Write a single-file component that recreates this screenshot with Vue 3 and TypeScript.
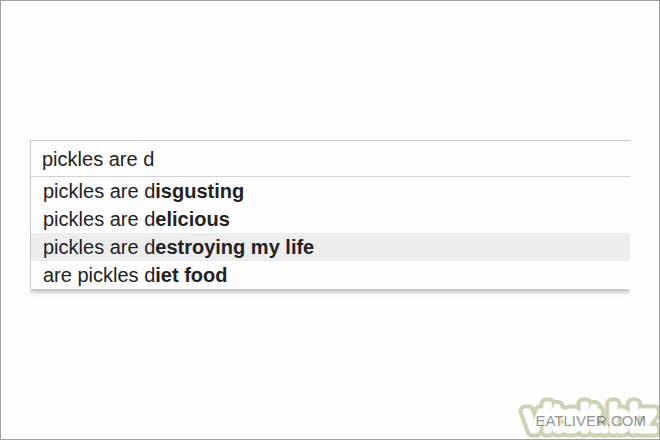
<script setup lang="ts">
import { ref } from 'vue'

interface Suggestion {
  typed: string
  rest: string
}

const query = ref('pickles are d')
const active = ref(2)
const suggestions: Suggestion[] = [
  { typed: 'pickles are d', rest: 'isgusting' },
  { typed: 'pickles are d', rest: 'elicious' },
  { typed: 'pickles are d', rest: 'estroying my life' },
  { typed: 'are pickles d', rest: 'iet food' },
]
</script>

<template>
  <main class="page">
    <form class="search" role="search" @submit.prevent>
      <input
        v-model="query"
        class="field"
        type="text"
        aria-label="Search"
        aria-controls="suggestions"
        autocomplete="off"
        spellcheck="false"
      />
      <ul id="suggestions" class="list">
        <li v-for="(item, index) in suggestions" :key="item.rest">
          <button
            type="button"
            class="option"
            :class="{ active: index === active }"
            @mouseenter="active = index"
            @click="query = item.typed + item.rest"
          >{{ item.typed }}<b>{{ item.rest }}</b></button>
        </li>
      </ul>
    </form>
    <div class="marks">
      <svg class="logo" width="142" height="54" viewBox="0 0 142 54">
        <text class="logo-text outline" x="7" y="45" aria-hidden="true">vitsit.biz</text>
        <text class="logo-text" x="7" y="45">vitsit.biz</text>
      </svg>
      <span class="credit">EATLIVER.COM</span>
    </div>
  </main>
</template>

<style>
body {
  margin: 0;
  background: #fefefe;
}
</style>

<style scoped>
.page {
  position: relative;
  box-sizing: border-box;
  min-height: 100vh;
  padding: 139px 29px 0;
  overflow: hidden;
  border: 1px solid #a0a0a0;
  background: #fefefe;
  color: #222;
  font-family: "Liberation Sans", Arial, sans-serif;
  font-size: 20px;
}

.search {
  border-top: 1px solid #c8c8c8;
  border-left: 1px solid #c8c8c8;
  box-shadow: 0 3px 5px rgba(0, 0, 0, 0.28);
  background: #fefefe;
  clip-path: inset(0 0 -12px 0);
}

.field {
  display: block;
  box-sizing: border-box;
  width: 100%;
  height: 36px;
  padding: 2px 11px 0;
  border: 0;
  border-bottom: 1px solid #d4d4d4;
  outline: 0;
  background: transparent;
  color: inherit;
  font: inherit;
}

.list {
  margin: 0;
  padding: 0;
  list-style: none;
}

.option {
  display: block;
  width: 100%;
  height: 28px;
  padding: 0 12px;
  border: 0;
  background: transparent;
  color: inherit;
  font: inherit;
  line-height: 28px;
  text-align: left;
}

.option.active {
  background: #ededed;
}

.marks {
  position: absolute;
  right: -1px;
  bottom: -1px;
  display: grid;
  align-items: end;
  justify-items: end;
}

.logo,
.credit {
  grid-area: 1 / 1;
}

.logo {
  display: block;
}

.logo-text {
  fill: #fefefe;
  stroke: #fefefe;
  stroke-width: 5px;
  stroke-linejoin: round;
  font-family: "Liberation Sans", Arial, sans-serif;
  font-size: 37px;
}

.logo-text.outline {
  stroke: #cbd3b3;
  stroke-width: 13px;
}

.credit {
  padding: 0 14px 11px 0;
  color: rgba(90, 90, 90, 0.65);
  font-size: 15px;
  line-height: 16px;
}
</style>
